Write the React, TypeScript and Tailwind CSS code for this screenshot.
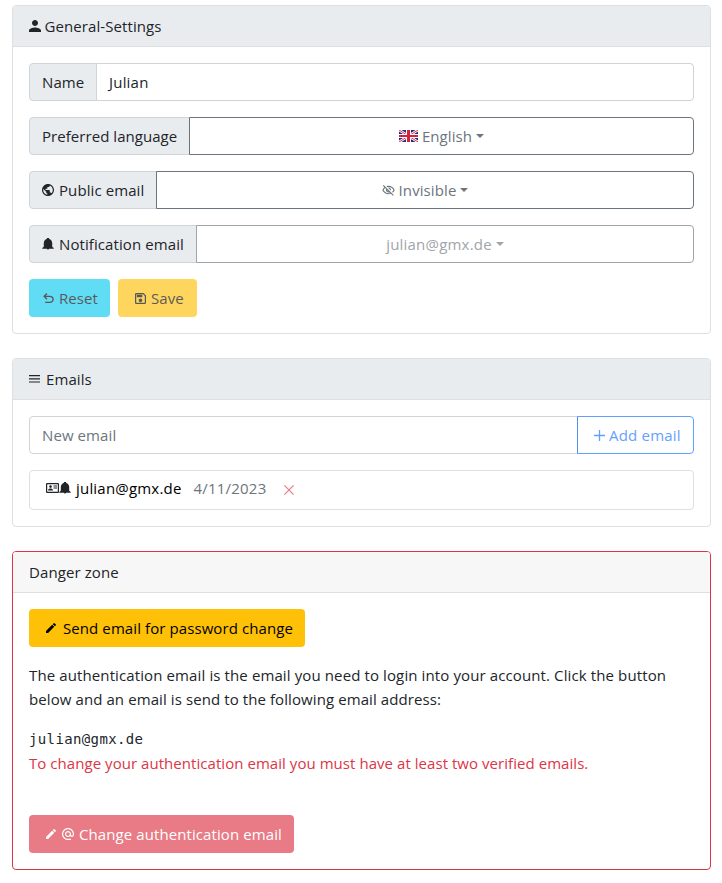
import React from "react";

type IconProps = { className?: string };

function Svg({ box, className, children }: { box: string; className?: string; children: React.ReactNode }) {
  return (
    <svg viewBox={box} fill="currentColor" className={`shrink-0 ${className ?? ""}`}>
      {children}
    </svg>
  );
}

const Person = ({ className }: IconProps) => (
  <Svg box="4 4 16 16" className={className}>
    <path d="M12 12c2.21 0 4-1.79 4-4s-1.79-4-4-4-4 1.79-4 4 1.79 4 4 4zm0 2c-2.67 0-8 1.34-8 4v2h16v-2c0-2.66-5.33-4-8-4z" />
  </Svg>
);
const Globe = ({ className }: IconProps) => (
  <Svg box="2 2 20 20" className={className}>
    <path d="M12 2C6.48 2 2 6.48 2 12s4.48 10 10 10 10-4.48 10-10S17.52 2 12 2zm-1 17.93c-3.95-.49-7-3.85-7-7.93 0-.62.08-1.21.21-1.79L9 15v1c0 1.1.9 2 2 2v1.93zm6.900-2.540c-.26-.81-1-1.390-1.900-1.390h-1v-3c0-.55-.45-1-1-1H8v-2h2c.55 0 1-.45 1-1V7h2c1.100 0 2-.9 2-2v-.41c2.930 1.190 5 4.060 5 7.410 0 2.080-.8 3.970-2.100 5.390z" />
  </Svg>
);
const Bell = ({ className }: IconProps) => (
  <Svg box="2 2 20 20" className={className}>
    <path d="M21.500 18.500V20h-19v-1.500L5 16.500V10.500c0-3.100 2-5.800 5-6.700v-.3a2 2 0 0 1 4 0v.3c3 .9 5 3.600 5 6.700v6zM14 20a2 1.200 0 0 1-4 0z" />
  </Svg>
);
const Undo = ({ className }: IconProps) => (
  <Svg box="160 -800 640 600" className={className}>
    <path d="M280-200v-80h284q63 0 109.500-40T720-420q0-60-46.500-100T564-560H312l104 104-56 56-200-200 200-200 56 56-104 104h252q97 0 169.500 63T800-420q0 94-72.500 157T564-200H280Z" />
  </Svg>
);
const Save = ({ className }: IconProps) => (
  <Svg box="3 3 18 18" className={className}>
    <path d="M17 3H5a2 2 0 0 0-2 2v14c0 1.100.89 2 2 2h14c1.100 0 2-.9 2-2V7l-4-4zm2 16H5V5h11.170L19 7.830V19zm-7-7c-1.660 0-3 1.340-3 3s1.340 3 3 3 3-1.340 3-3-1.340-3-3-3zM6 6h9v4H6z" />
  </Svg>
);
const EyeOff = ({ className }: IconProps) => (
  <Svg box="1 2.500 22 19.500" className={className}>
    <path d="M12 6c3.790 0 7.170 2.130 8.820 5.500-.59 1.220-1.420 2.270-2.410 3.120l1.410 1.410c1.390-1.230 2.490-2.770 3.180-4.530C21.270 7.110 17 4 12 4c-1.270 0-2.490.2-3.640.57l1.650 1.650C10.660 6.090 11.320 6 12 6zm-1.070 1.140L13 9.210c.57.25 1.030.71 1.280 1.280l2.070 2.070c.08-.34.14-.7.14-1.070C16.500 9.010 14.480 7 12 7c-.37 0-.72.05-1.070.14zM2.010 3.870l2.680 2.680C3.060 7.830 1.770 9.530 1 11.500 2.730 15.890 7 19 12 19c1.520 0 2.980-.29 4.320-.82l3.420 3.420 1.410-1.410L3.420 2.450 2.010 3.870zm7.500 7.500l2.610 2.610c-.04.01-.08.02-.12.02-1.380 0-2.500-1.120-2.500-2.500 0-.05.01-.08.01-.13zm-3.400-3.400l1.750 1.750c-.23.55-.36 1.150-.36 1.780 0 2.480 2.020 4.500 4.500 4.500.63 0 1.230-.13 1.770-.36l.98.98c-.88.24-1.800.38-2.750.38-3.790 0-7.170-2.130-8.820-5.500.7-1.430 1.720-2.610 2.930-3.530z" />
  </Svg>
);
const Pencil = ({ className }: IconProps) => (
  <Svg box="3 3 18 18" className={className}>
    <path d="M3 17.250V21h3.750L17.810 9.940l-3.750-3.750L3 17.250zM20.710 7.040a1 1 0 0 0 0-1.410l-2.340-2.340a1 1 0 0 0-1.410 0l-1.830 1.830 3.750 3.750 1.830-1.830z" />
  </Svg>
);
const At = ({ className }: IconProps) => (
  <Svg box="2 2 20 20" className={className}>
    <path d="M12 2C6.480 2 2 6.480 2 12s4.480 10 10 10h5v-2h-5c-4.340 0-8-3.660-8-8s3.660-8 8-8 8 3.660 8 8v1.430c0 .79-.71 1.570-1.500 1.570s-1.500-.78-1.500-1.570V12c0-2.760-2.240-5-5-5s-5 2.240-5 5 2.240 5 5 5c1.380 0 2.640-.56 3.540-1.470.65.89 1.770 1.470 2.960 1.470 1.970 0 3.500-1.600 3.500-3.570V12c0-5.520-4.480-10-10-10zm0 13c-1.660 0-3-1.340-3-3s1.340-3 3-3 3 1.340 3 3-1.340 3-3 3z" />
  </Svg>
);
const Lines = ({ className }: IconProps) => (
  <Svg box="0 0 11 8" className={className}>
    <path d="M0 0h11v1.200H0zM0 3.200h11v1.200H0zM0 6.400h11v1.200H0z" />
  </Svg>
);
const Plus = ({ className }: IconProps) => (
  <Svg box="0 0 12 12" className={className}>
    <path d="M5.300 0h1.400v5.300H12v1.400H6.700V12H5.300V6.700H0V5.300h5.300z" />
  </Svg>
);
const Cross = ({ className }: IconProps) => (
  <svg viewBox="0 0 10 10" className={`shrink-0 ${className ?? ""}`} fill="none" stroke="currentColor" strokeWidth="1.200">
    <path d="M.4.4l9.200 9.200M9.600.4L.4 9.600" />
  </svg>
);
const IdCard = ({ className }: IconProps) => (
  <Svg box="0 0 13 10" className={className}>
    <path fillRule="evenodd" d="M1 0h11a1 1 0 0 1 1 1v8a1 1 0 0 1-1 1H1a1 1 0 0 1-1-1V1a1 1 0 0 1 1-1zm.2 1.200v7.600h10.600V1.200z" />
    <circle cx="4.500" cy="3.600" r="1.300" />
    <path d="M2 7.500c0-1.500 1.500-2 2.500-2s2.500.5 2.500 2zM7.500 2.500H11v1H7.500zM7.500 4.500H11v.9H7.500z" />
  </Svg>
);
const Flag = ({ className }: IconProps) => (
  <svg viewBox="0 0 19 12" className={`shrink-0 ${className ?? ""}`}>
    <path fill="#1b2f7d" d="M0 0h19v12H0z" />
    <path stroke="#fff" strokeWidth="2.600" d="M0 0l19 12M19 0L0 12" />
    <path stroke="#d8203c" strokeWidth=".9" d="M0 0l19 12M19 0L0 12" />
    <path fill="#fff" d="M7 0h5v12H7zM0 4h19v4H0z" />
    <path fill="#d8203c" d="M8 0h3v12H8zM0 5h19v2H0z" />
  </svg>
);
const Caret = () => (
  <span className="h-0 w-0 border-x-[4.500px] border-t-[4.800px] border-x-transparent border-t-current" />
);

function Addon({ className, children }: { className: string; children: React.ReactNode }) {
  return (
    <div className={`flex h-[38px] shrink-0 items-center whitespace-nowrap rounded-l border border-[#ced4da] bg-[#e9ecef] pl-3 ${className}`}>
      {children}
    </div>
  );
}

function Picker({ className, children }: { className: string; children: React.ReactNode }) {
  return (
    <button className={`-ml-px flex h-[38px] flex-1 items-center justify-center rounded-r border ${className}`}>
      {children}
    </button>
  );
}

export default function App() {
  return (
    <div className="flex h-[883px] w-[722px] flex-col gap-6 bg-white pt-[5px] pr-[11px] pl-3 font-['Open_Sans','Noto_Sans',sans-serif] text-[15px] leading-6 tracking-[0.090px] text-[#212529]">
      <section className="rounded border border-[#dfdfdf]">
        <header className="flex h-[41px] items-center rounded-t-[3px] border-b border-[#dfdfdf] bg-[#e9ecef] px-4">
          <Person className="mr-[3.500px] h-3 w-3" />
          General-Settings
        </header>
        <div className="flex flex-col gap-4 p-4">
          <div className="flex">
            <Addon className="w-[68px]">Name</Addon>
            <div className="-ml-px flex h-[38px] flex-1 items-center rounded-r border border-[#ced4da] px-3 tracking-[0.200px]">Julian</div>
          </div>
          <div className="flex">
            <Addon className="w-[161px] tracking-[0.050px]">Preferred language</Addon>
            <Picker className="border-[#6c757d] text-[#6c757d]">
              <Flag className="mr-1 h-3 w-[19px]" />
              <span className="mr-1">English</span>
              <Caret />
            </Picker>
          </div>
          <div className="flex">
            <Addon className="w-[128px]">
              <Globe className="mr-[5px] h-3 w-3" />
              Public email
            </Addon>
            <Picker className="border-[#6c757d] text-[#6c757d]">
              <EyeOff className="mr-1 h-[11px] w-[13px]" />
              <span className="mr-1">Invisible</span>
              <Caret />
            </Picker>
          </div>
          <div className="flex">
            <Addon className="w-[168px]">
              <Bell className="mr-[5px] h-3 w-3" />
              Notification email
            </Addon>
            <Picker className="border-[#9fa5aa] text-[#9fa5aa]">
              <span className="mr-1 tracking-[0.200px]">julian@gmx.de</span>
              <Caret />
            </Picker>
          </div>
          <div className="flex gap-2">
            <button className="flex h-[38px] w-[81px] items-center rounded bg-[#0dcaf0] pl-[14px] text-black opacity-65">
              <Undo className="mr-[5px] h-[10px] w-[11px]" />
              Reset
            </button>
            <button className="flex h-[38px] w-[79px] items-center rounded bg-[#ffc107] pl-[17px] text-black opacity-65">
              <Save className="mr-[5px] h-[11px] w-[11px]" />
              Save
            </button>
          </div>
        </div>
      </section>

      <section className="rounded border border-[#dfdfdf]">
        <header className="flex h-[41px] items-center rounded-t-[3px] border-b border-[#dfdfdf] bg-[#e9ecef] px-4">
          <Lines className="mr-[6px] h-2 w-[11px]" />
          Emails
        </header>
        <div className="flex flex-col gap-4 p-4">
          <div className="flex">
            <div className="flex h-[38px] flex-1 items-center rounded-l border border-[#ced4da] px-3 text-[#6c757d]">New email</div>
            <button className="-ml-px flex h-[38px] w-[117px] items-center rounded-r border border-[#0d6efd] pl-4 tracking-[0.200px] text-[#0d6efd] opacity-65">
              <Plus className="mr-1 h-[11px] w-[11px]" />
              Add email
            </button>
          </div>
          <div className="flex h-10 items-center rounded border border-[#dfdfdf] pb-1 pl-4">
            <IdCard className="h-[10px] w-[13px]" />
            <Bell className="mr-[5px] h-3 w-3" />
            <span className="tracking-[0.200px] text-black">julian@gmx.de</span>
            <span className="ml-3 tracking-[0.200px] text-[#6c757d]">4/11/2023</span>
            <Cross className="mt-1 ml-[18px] h-[10px] w-[10px] text-[#e87c86]" />
          </div>
        </div>
      </section>

      <section className="rounded border border-[#dc3545]">
        <header className="flex h-[41px] items-center rounded-t-[3px] border-b border-[#dfdfdf] bg-[#f7f7f7] px-4">Danger zone</header>
        <div className="p-4">
          <button className="flex h-[38px] w-[276px] items-center whitespace-nowrap rounded bg-[#ffc107] pl-[17px] text-black">
            <Pencil className="mr-[7px] h-[10px] w-[10px]" />
            Send email for password change
          </button>
          <p className="my-4 whitespace-nowrap tracking-[0.115px]">
            The authentication email is the email you need to login into your account. Click the button
            <br />
            <span className="tracking-[0.090px]">below and an email is send to the following email address:</span>
          </p>
          <p className="font-['DejaVu_Sans_Mono',monospace] text-[14px] tracking-[0.370px]">julian@gmx.de</p>
          <p className="mb-10 whitespace-nowrap tracking-[0.050px] text-[#dc3545]">To change your authentication email you must have at least two verified emails.</p>
          <button className="flex h-[38px] w-[265px] items-center whitespace-nowrap rounded bg-[#dc3545] pl-[17px] text-white opacity-65">
            <Pencil className="mr-[6px] h-[10px] w-[10px]" />
            <At className="mr-[5px] h-3 w-3" />
            Change authentication email
          </button>
        </div>
      </section>
    </div>
  );
}
